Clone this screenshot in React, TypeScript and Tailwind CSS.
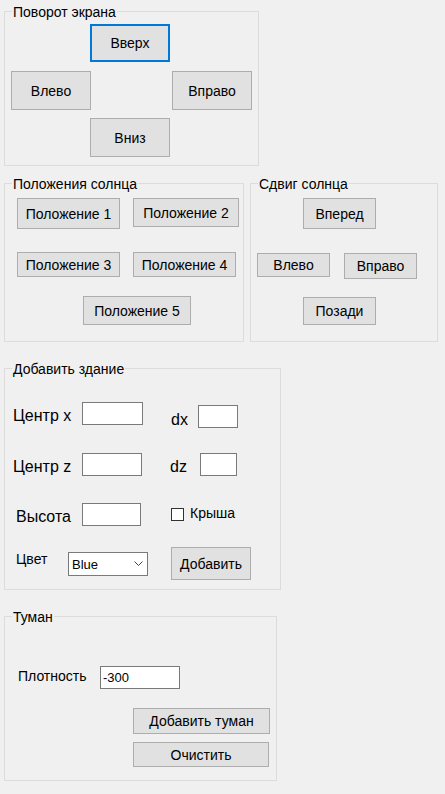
import React from "react";

const Btn = ({ text, className, focused }: { text: string; className: string; focused?: boolean }) => (
  <button
    className={
      "flex shrink-0 items-center justify-center bg-[#e1e1e1] text-[14px] leading-[16px] text-black " +
      (focused ? "border-2 border-[#0078d7] " : "border border-[#adadad] ") +
      className
    }
  >
    {text}
  </button>
);

const Group = ({ title, className, children }: { title: string; className: string; children: React.ReactNode }) => (
  <div className={"relative shrink-0 border border-[#dcdcdc] " + className}>
    <span className="absolute -top-[8px] left-[7px] bg-[#f0f0f0] px-[1px] text-[14px] leading-[16px] whitespace-nowrap">
      {title}
    </span>
    {children}
  </div>
);

const Field = ({ className, value }: { className: string; value?: string }) => (
  <div
    className={
      "flex shrink-0 items-center border border-[#7a7a7a] bg-white pl-[2px] text-[13px] leading-[15px] " + className
    }
  >
    {value}
  </div>
);

export default function App() {
  return (
    <div className="flex h-[794px] w-[445px] flex-col overflow-hidden bg-[#f0f0f0] font-['Liberation_Sans',Arial,sans-serif] text-black">
      {/* Поворот экрана */}
      <Group title="Поворот экрана" className="ml-[4px] mt-[11px] h-[155px] w-[255px]">
        <div className="ml-[85px] mt-[12px] flex">
          <Btn text="Вверх" focused className="h-[38px] w-[80px]" />
        </div>
        <div className="mt-[9px] flex">
          <Btn text="Влево" className="ml-[6px] h-[39px] w-[80px]" />
          <Btn text="Вправо" className="ml-[81px] h-[39px] w-[80px]" />
        </div>
        <div className="ml-[85px] mt-[8px] flex">
          <Btn text="Вниз" className="h-[39px] w-[80px]" />
        </div>
      </Group>

      <div className="mt-[17px] flex">
        {/* Положения солнца */}
        <Group title="Положения солнца" className="ml-[4px] h-[159px] w-[240px]">
          <div className="mt-[14px] flex items-start">
            <Btn text="Положение 1" className="ml-[12px] h-[31px] w-[103px]" />
            <Btn text="Положение 2" className="ml-[13px] h-[29px] w-[106px]" />
          </div>
          <div className="mt-[23px] flex items-start">
            <Btn text="Положение 3" className="ml-[12px] h-[25px] w-[103px]" />
            <Btn text="Положение 4" className="ml-[13px] h-[25px] w-[103px]" />
          </div>
          <div className="mt-[19px] flex">
            <Btn text="Положение 5" className="ml-[78px] h-[29px] w-[108px]" />
          </div>
        </Group>

        {/* Сдвиг солнца */}
        <Group title="Сдвиг солнца" className="ml-[6px] h-[159px] w-[188px]">
          <div className="mt-[14px] flex">
            <Btn text="Вперед" className="ml-[52px] h-[31px] w-[73px]" />
          </div>
          <div className="mt-[24px] flex items-start">
            <Btn text="Влево" className="ml-[6px] h-[24px] w-[73px]" />
            <Btn text="Вправо" className="ml-[14px] h-[26px] w-[73px]" />
          </div>
          <div className="mt-[18px] flex">
            <Btn text="Позади" className="ml-[52px] h-[28px] w-[73px]" />
          </div>
        </Group>
      </div>

      {/* Добавить здание */}
      <Group title="Добавить здание" className="ml-[4px] mt-[26px] h-[222px] w-[277px]">
        <div className="mt-[33px] flex items-start">
          <span className="ml-[8px] mt-[5px] w-[69px] text-[16px] leading-[18px]">Центр x</span>
          <Field className="h-[23px] w-[61px]" />
          <span className="ml-[28px] mt-[9px] w-[27px] text-[16px] leading-[18px]">dx</span>
          <Field className="mt-[3px] h-[23px] w-[40px]" />
        </div>
        <div className="mt-[24px] flex items-start">
          <span className="ml-[8px] mt-[5px] w-[69px] text-[16px] leading-[18px]">Центр z</span>
          <Field className="h-[23px] w-[60px]" />
          <span className="ml-[28px] mt-[5px] w-[30px] text-[16px] leading-[18px]">dz</span>
          <Field className="h-[23px] w-[37px]" />
        </div>
        <div className="mt-[27px] flex items-start">
          <span className="ml-[11px] mt-[5px] w-[66px] text-[16px] leading-[18px]">Высота</span>
          <Field className="h-[23px] w-[59px]" />
          <span className="ml-[30px] mt-[5px] h-[13px] w-[13px] shrink-0 border border-[#333] bg-white" />
          <span className="ml-[6px] mt-[2px] text-[14px] leading-[16px]">Крыша</span>
        </div>
        <div className="mt-[21px] flex items-start">
          <span className="ml-[11px] mt-[4px] w-[52px] text-[14px] leading-[16px]">Цвет</span>
          <div className="mt-[5px] flex h-[24px] w-[80px] shrink-0 items-center justify-between border border-[#7a7a7a] bg-white pl-[3px] pr-[4px] text-[13px] leading-[15px]">
            <span>Blue</span>
            <svg width="9" height="6" viewBox="0 0 9 6" fill="none">
              <path d="M0.5 0.5 L4.5 4.5 L8.5 0.5" stroke="#444" strokeWidth="1" />
            </svg>
          </div>
          <Btn text="Добавить" className="ml-[23px] h-[33px] w-[80px]" />
        </div>
      </Group>

      {/* Туман */}
      <Group title="Туман" className="ml-[4px] mt-[26px] h-[165px] w-[273px]">
        <div className="mt-[49px] flex items-start">
          <span className="ml-[13px] mt-[2px] w-[82px] text-[14px] leading-[16px]">Плотность</span>
          <Field className="h-[23px] w-[80px]" value="-300" />
        </div>
        <div className="mt-[19px] flex">
          <Btn text="Добавить туман" className="ml-[128px] h-[26px] w-[137px]" />
        </div>
        <div className="mt-[8px] flex">
          <Btn text="Очистить" className="ml-[128px] h-[25px] w-[136px]" />
        </div>
      </Group>
    </div>
  );
}
